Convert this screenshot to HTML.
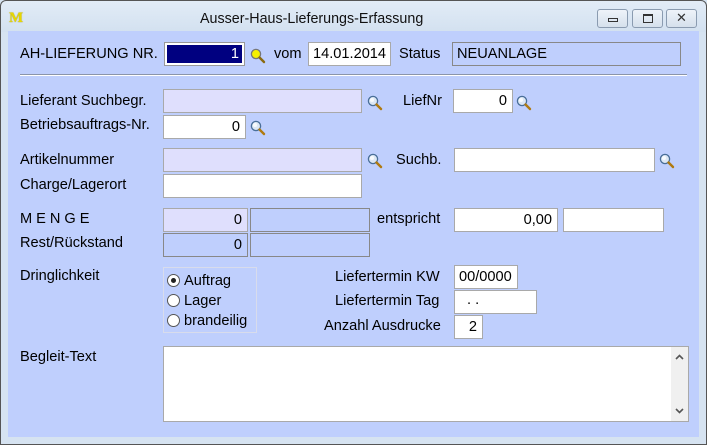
<!DOCTYPE html>
<html><head><meta charset="utf-8"><style>
*{box-sizing:border-box;margin:0;padding:0}
body{width:707px;height:445px;overflow:hidden;background:#d6e3f1;font-family:"Liberation Sans",sans-serif;font-size:14.6px;color:#000;position:relative}
.frame{position:absolute;left:0;top:0;width:707px;height:445px;border:1px solid #555;border-radius:6px 6px 0 0;background:linear-gradient(#e2ecf7,#d3e1f0 31px,#d6e3f1 31px)}
.client{position:absolute;left:8px;top:31px;width:691px;height:406px;background:#bfcffd}
.t{position:absolute;white-space:nowrap;line-height:16px}
.i{position:absolute;border:1px solid #a9a9a9;background:#fff;text-align:right;padding-right:5px;line-height:22px;height:24px}
.lav{background:#dfdffd}
.bl{background:#bfcffd;border-color:#888}
.mag{position:absolute;width:16px;height:16px}
.btn{position:absolute;top:9px;height:19px;border:1px solid #8a9bb0;border-radius:3px;background:linear-gradient(#eef3f9,#d5e0ec)}
.rad{position:absolute;width:13px;height:13px;border:1px solid #555;border-radius:50%;background:#fff}
</style></head><body>
<div class="frame"></div>
<div class="t" style="left:9px;top:10px;color:#e8d800;font-weight:bold;font-family:'Liberation Serif',serif;font-size:15px;text-shadow:0 0 1px #8a7a00">M</div>
<div class="t" style="left:200px;top:11px;font-size:14.3px;color:#111">Ausser-Haus-Lieferungs-Erfassung</div>
<div class="btn" style="left:597px;width:31px"><div style="position:absolute;left:10px;top:8px;width:10px;height:4px;border:1px solid #333"></div></div>
<div class="btn" style="left:632px;width:31px"><div style="position:absolute;left:10px;top:4px;width:10px;height:9px;border:1px solid #333;border-top-width:2px"></div></div>
<div class="btn" style="left:666px;width:31px;text-align:center;line-height:16px;font-size:13px;color:#333">✕</div>
<div class="client"></div>
<svg width="0" height="0" style="position:absolute"><defs><symbol id="m" viewBox="0 0 16 16"><circle cx="6" cy="6" r="4.6" fill="#dde8f5" stroke="#4a6f99" stroke-width="1.3"/><circle cx="5" cy="5" r="2" fill="#fff" opacity=".8"/><path d="M9.5 9.5l4.5 4.5" stroke="#b07a10" stroke-width="2.4" stroke-linecap="round"/></symbol><symbol id="my" viewBox="0 0 16 16"><circle cx="6" cy="6" r="4.6" fill="#f5f000" stroke="#777" stroke-width="1.3"/><path d="M9.5 9.5l4.5 4.5" stroke="#8a6a10" stroke-width="2.4" stroke-linecap="round"/></symbol></defs></svg>

<div class="t" style="left:20px;top:46px">AH-LIEFERUNG NR.</div>
<div class="i" style="left:164px;top:42px;width:81px;border-color:#999;padding:2px"><div style="background:#000080;color:#fff;height:18px;line-height:18px;text-align:right;padding-right:3px">1</div></div>
<svg class="mag" style="left:250px;top:48px"><use href="#my"/></svg>
<div class="t" style="left:274px;top:46px">vom</div>
<div class="i" style="left:308px;top:42px;width:83px;text-align:left;padding-left:4px">14.01.2014</div>
<div class="t" style="left:399px;top:46px">Status</div>
<div class="i bl" style="left:452px;top:42px;width:229px;text-align:left;padding-left:4px">NEUANLAGE</div>
<div style="position:absolute;left:20px;top:74px;width:667px;height:2px;border-top:1px solid #8b95aa;border-bottom:1px solid #fff"></div>

<div class="t" style="left:20px;top:93px">Lieferant Suchbegr.</div>
<div class="i lav" style="left:163px;top:89px;width:199px"></div>
<svg class="mag" style="left:367px;top:95px"><use href="#m"/></svg>
<div class="t" style="left:403px;top:93px">LiefNr</div>
<div class="i" style="left:453px;top:89px;width:60px">0</div>
<svg class="mag" style="left:516px;top:95px"><use href="#m"/></svg>
<div class="t" style="left:20px;top:117px">Betriebsauftrags-Nr.</div>
<div class="i" style="left:163px;top:115px;width:83px">0</div>
<svg class="mag" style="left:250px;top:120px"><use href="#m"/></svg>

<div class="t" style="left:20px;top:152px">Artikelnummer</div>
<div class="i lav" style="left:163px;top:148px;width:199px"></div>
<svg class="mag" style="left:367px;top:153px"><use href="#m"/></svg>
<div class="t" style="left:396px;top:152px">Suchb.</div>
<div class="i" style="left:454px;top:148px;width:201px"></div>
<svg class="mag" style="left:659px;top:153px"><use href="#m"/></svg>
<div class="t" style="left:20px;top:177px">Charge/Lagerort</div>
<div class="i" style="left:163px;top:174px;width:199px"></div>

<div class="t" style="left:20px;top:211px;letter-spacing:4px">MENGE</div>
<div class="i lav" style="left:163px;top:208px;width:85px">0</div>
<div class="i bl" style="left:250px;top:208px;width:120px"></div>
<div class="t" style="left:377px;top:211px">entspricht</div>
<div class="i" style="left:454px;top:208px;width:104px">0,00</div>
<div class="i" style="left:563px;top:208px;width:101px"></div>
<div class="t" style="left:20px;top:235px">Rest/Rückstand</div>
<div class="i bl" style="left:163px;top:233px;width:85px">0</div>
<div class="i bl" style="left:250px;top:233px;width:120px"></div>

<div class="t" style="left:20px;top:268px">Dringlichkeit</div>
<div style="position:absolute;left:163px;top:267px;width:94px;height:66px;border:1px solid #d8dcec"></div>
<div class="rad" style="left:167px;top:274px"><div style="position:absolute;left:3px;top:3px;width:5px;height:5px;border-radius:50%;background:#222"></div></div>
<div class="t" style="left:184px;top:273px">Auftrag</div>
<div class="rad" style="left:167px;top:294px"></div>
<div class="t" style="left:184px;top:293px">Lager</div>
<div class="rad" style="left:167px;top:314px"></div>
<div class="t" style="left:184px;top:313px">brandeilig</div>

<div class="t" style="left:335px;top:269px">Liefertermin KW</div>
<div class="i" style="left:454px;top:265px;width:64px;text-align:left;padding-left:4px">00/0000</div>
<div class="t" style="left:335px;top:293px">Liefertermin Tag</div>
<div class="i" style="left:454px;top:290px;width:83px;text-align:left;padding-left:12px;line-height:18px">. .</div>
<div class="t" style="left:324px;top:318px">Anzahl Ausdrucke</div>
<div class="i" style="left:454px;top:315px;width:29px">2</div>

<div class="t" style="left:20px;top:349px">Begleit-Text</div>
<div class="i" style="left:163px;top:346px;width:526px;height:76px"><div style="position:absolute;right:0;top:0;width:17px;height:74px;background:#f0f0f0">
<svg width="17" height="74" style="position:absolute;left:0;top:0"><path d="M5 12l3.5-3.5L12 12" fill="none" stroke="#555" stroke-width="1.6"/><path d="M5 62l3.5 3.5L12 62" fill="none" stroke="#555" stroke-width="1.6"/></svg></div></div>
</body></html>
